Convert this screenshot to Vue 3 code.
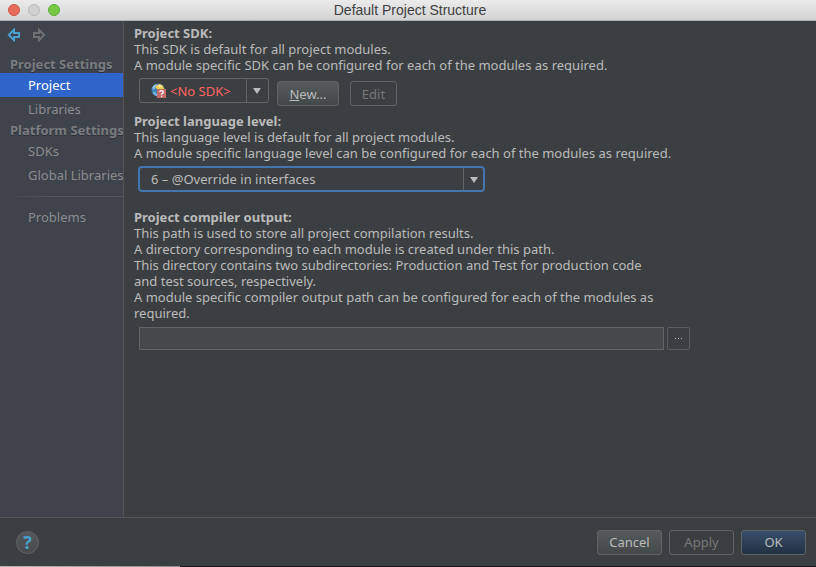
<script setup>
import { ref } from 'vue'

const current = ref('Project')
const groups = [
  { title: 'Project Settings', items: ['Project', 'Libraries'] },
  { title: 'Platform Settings', items: ['SDKs', 'Global Libraries'] },
]
const sdk = ref('none')
const level = ref('6')
const output = ref('')
</script>

<template>
  <div class="window">
    <header class="titlebar">
      <div class="lights">
        <button class="light red" aria-label="Close"></button>
        <button class="light gray" aria-label="Minimize"></button>
        <button class="light green" aria-label="Zoom"></button>
      </div>
      <h1>Default Project Structure</h1>
    </header>

    <div class="body">
      <nav class="sidebar">
        <div class="history">
          <button class="arrow back" aria-label="Back">
            <svg width="14" height="14" viewBox="0 0 14 14"><path d="M7 1.8 1.8 7 7 12.2V9h5V5H7z" /></svg>
          </button>
          <button class="arrow forward" aria-label="Forward">
            <svg width="14" height="14" viewBox="0 0 14 14"><path d="M7 1.8 12.2 7 7 12.2V9H2V5h5z" /></svg>
          </button>
        </div>
        <section v-for="group in groups" :key="group.title">
          <h2>{{ group.title }}</h2>
          <a
            v-for="item in group.items"
            :key="item"
            href="#"
            class="item"
            :class="{ active: current === item }"
            @click.prevent="current = item"
          >{{ item }}</a>
        </section>
        <div class="separator"></div>
        <a href="#" class="item" :class="{ active: current === 'Problems' }" @click.prevent="current = 'Problems'">Problems</a>
      </nav>

      <main class="content">
        <section class="block sdk">
          <label class="title" for="sdk">Project SDK:</label>
          <p>This SDK is default for all project modules.<br />A module specific SDK can be configured for each of the modules as required.</p>
          <div class="controls">
            <div class="combo combo-sdk">
              <svg class="sdk-icon" width="16" height="16" viewBox="0 0 16 16">
                <circle cx="7" cy="7" r="6.5" fill="#3a80b8" />
                <path d="M1 5A6.5 6.5 0 0 1 5.5 .8L4.5 4 3 7z" fill="#8dbfe0" />
                <path d="M5 2.4 8.6 1l3.2 1.6 1.5 3.4H6L4.4 5z" fill="#e8cf52" />
                <path d="M6.4 3 9 2l2 1.2L9 4.6z" fill="#fbf0a0" />
                <path d="M1.5 9.5 4 8.5 6 11v2.3C4 13 2.2 11.6 1.5 9.5z" fill="#6fb0da" />
                <rect x="6" y="6" width="9" height="9" fill="#c76b68" />
                <path d="M8.7 9.1c0-2 3.7-2 3.7 0 0 1.3-1.8 1.2-1.8 2.6M10.6 12.7v1.2" fill="none" stroke="#fff" stroke-width="1.2" />
              </svg>
              <select id="sdk" v-model="sdk">
                <option value="none">&lt;No SDK&gt;</option>
              </select>
              <span class="drop"></span>
            </div>
            <button class="btn new"><u>N</u>ew...</button>
            <button class="btn edit" disabled>Edit</button>
          </div>
        </section>

        <section class="block language">
          <label class="title" for="level">Project language level:</label>
          <p>This language level is default for all project modules.<br />A module specific language level can be configured for each of the modules as required.</p>
          <div class="combo combo-level">
            <select id="level" v-model="level">
              <option value="6">6 – @Override in interfaces</option>
            </select>
            <span class="drop"></span>
          </div>
        </section>

        <section class="block">
          <label class="title" for="output">Project compiler output:</label>
          <p>This path is used to store all project compilation results.<br />A directory corresponding to each module is created under this path.<br />This directory contains two subdirectories: Production and Test for production code<br />and test sources, respectively.<br />A module specific compiler output path can be configured for each of the modules as<br />required.</p>
          <div class="path">
            <input id="output" v-model="output" type="text" />
            <button class="browse" aria-label="Browse"><svg width="7" height="1" viewBox="0 0 7 1"><path d="M0 0h1v1H0zM3 0h1v1H3zM6 0h1v1H6z" /></svg></button>
          </div>
        </section>
      </main>
    </div>

    <footer class="footer">
      <button class="help" aria-label="Help">?</button>
      <div class="actions">
        <button class="btn">Cancel</button>
        <button class="btn" disabled>Apply</button>
        <button class="btn primary">OK</button>
      </div>
    </footer>
    <div class="edge"></div>
  </div>
</template>

<style>
body {
  margin: 0;
  background: #3c3f41;
}
</style>

<style scoped>
* {
  box-sizing: border-box;
}
.window {
  display: flex;
  flex-direction: column;
  min-height: 100vh;
  background: #3c3f41;
  color: #bbbbbb;
  font-family: "Noto Sans", "Open Sans", sans-serif;
  font-size: 13px;
  line-height: 16px;
}
button,
select,
input {
  font: inherit;
  color: inherit;
  margin: 0;
  padding: 0;
}
.titlebar {
  display: grid;
  grid-template-columns: 1fr auto 1fr;
  align-items: center;
  height: 21px;
  background: linear-gradient(#ebebeb, #d3d3d3);
  border-bottom: 1px solid #b1b1b1;
}
.titlebar h1 {
  margin: 0;
  padding-left: 4px;
  font: 14px/20px "Liberation Sans", sans-serif;
  color: #404040;
}
.lights {
  display: flex;
  gap: 8px;
  padding-left: 8px;
}
.light {
  width: 12px;
  height: 12px;
  border-radius: 50%;
  border: 1px solid;
}
.red {
  background: #e66b5b;
  border-color: #cf5548;
}
.gray {
  background: #d0d0d0;
  border-color: #b9b9b9;
}
.green {
  background: #78c845;
  border-color: #5faf33;
}
.body {
  display: flex;
  flex: 1;
}
.sidebar {
  width: 124px;
  flex: none;
  overflow: hidden;
  background: #3f434c;
  border-right: 1px solid #555555;
  white-space: nowrap;
}
.history {
  display: flex;
  gap: 11px;
  height: 34px;
  padding: 7px 0 0 7px;
}
.arrow {
  width: 14px;
  height: 14px;
  border: 0;
  background: none;
}
.arrow svg {
  display: block;
  fill: none;
  stroke: #707070;
  stroke-width: 2;
}
.arrow.back svg {
  stroke: #4a9fcf;
}
.sidebar h2 {
  margin: 0;
  padding-left: 10px;
  height: 18px;
  font-size: 13px;
  line-height: 18px;
  font-weight: 700;
  color: #7b7c7f;
  text-shadow: 0 1px 0 #2d3036;
}
.item {
  display: block;
  height: 24px;
  line-height: 24px;
  padding-left: 28px;
  color: #8b8c8e;
  text-decoration: none;
}
.item.active {
  background: #2f65ca;
  color: #ffffff;
}
.separator {
  height: 1px;
  margin: 9px 0 8px 8px;
  background: linear-gradient(90deg, #3f434c, #555555 30%);
}
.content {
  flex: 1;
  padding: 4px 10px;
}
.title {
  display: block;
  font-weight: 700;
}
.block p {
  margin: 0;
}
.controls {
  display: flex;
  align-items: flex-start;
  padding: 5px 0 0 5px;
}
.combo {
  position: relative;
  height: 25px;
  border: 1px solid #646464;
  border-radius: 3px;
}
.combo select {
  display: block;
  width: 100%;
  height: 100%;
  border: 0;
  outline: 0;
  appearance: none;
  background: transparent;
  padding-left: 12px;
}
.combo-sdk {
  width: 130px;
}
.combo-sdk select {
  padding-left: 30px;
  color: #ff6464;
}
.sdk-icon {
  position: absolute;
  left: 11px;
  top: 4px;
}
.drop {
  position: absolute;
  top: 0;
  right: 0;
  bottom: 0;
  width: 22px;
  border-left: 1px solid #646464;
  pointer-events: none;
}
.drop::after {
  content: "";
  position: absolute;
  left: 6px;
  top: 9px;
  border: 4px solid transparent;
  border-top: 6px solid #bbbbbb;
  border-bottom: 0;
}
.btn {
  height: 25px;
  min-width: 65px;
  border: 1px solid #5f6364;
  border-radius: 3px;
  background: linear-gradient(#555a5c, #434849);
}
.btn:disabled {
  color: #777777;
  background: none;
}
.btn.primary {
  background: linear-gradient(#384f6b, #233143);
}
.btn.new {
  min-width: 62px;
  margin: 3px 11px 0 8px;
}
.btn.edit {
  min-width: 47px;
  margin-top: 3px;
}
.language {
  padding: 7px 0 17px;
}
.combo-level {
  width: 347px;
  height: 26px;
  margin: 5px 0 0 4px;
  border: 2px solid #4375ae;
  border-radius: 4px;
}
.combo-level select {
  padding-left: 11px;
}
.combo-level .drop {
  width: 20px;
}
.path {
  display: flex;
  gap: 3px;
  width: 556px;
  max-width: 100%;
  padding: 6px 0 0 5px;
}
.path input {
  flex: 1;
  min-width: 0;
  height: 23px;
  padding: 0 4px;
  border: 1px solid #646464;
  border-radius: 0;
  outline: 0;
  background: #45494a;
}
.browse {
  display: flex;
  align-items: center;
  justify-content: center;
  width: 23px;
  height: 23px;
  border: 1px solid #5a5d5e;
  border-radius: 2px;
  background: none;
}
.browse svg {
  fill: #bbbbbb;
}
.footer {
  display: flex;
  justify-content: space-between;
  align-items: center;
  height: 49px;
  padding: 0 10px 0 16px;
  border-top: 1px solid #555555;
}
.help {
  width: 23px;
  height: 23px;
  border: 1px solid #626567;
  border-radius: 50%;
  background: linear-gradient(#54585a, #474b4c);
  color: #4a9fcf;
  font-size: 18px;
  line-height: 20px;
  font-weight: 700;
}
.actions {
  display: flex;
  gap: 7px;
}
.edge {
  height: 1px;
  background: linear-gradient(90deg, #b8b3b3 0, #8f8b8c 22%, #1b151b 22%);
}
</style>
